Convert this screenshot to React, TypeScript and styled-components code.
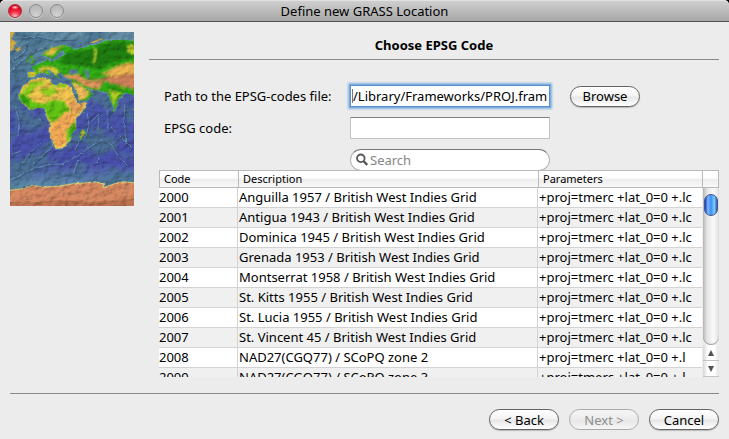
import React from "react";
import styled, { createGlobalStyle } from "styled-components";

const GlobalStyle = createGlobalStyle`
  * { box-sizing: border-box; }
  body { margin: 0; background: #000; }
  body, button, input { font-family: "Noto Sans", "Open Sans", sans-serif; font-size: 13px; color: #000; }
`;

const Window = styled.main`
  display: flex;
  flex-direction: column;
  min-height: 100vh;
  background: #ececec;
  border-radius: 5px 5px 0 0;
`;

const TitleBar = styled.header`
  display: grid;
  grid-template-columns: 1fr auto 1fr;
  align-items: center;
  height: 22px;
  padding: 0 8px;
  border-top: 1px solid #e2e2e2;
  border-bottom: 1px solid #515151;
  border-radius: 5px 5px 0 0;
  background: linear-gradient(#cfcfcf, #a7a7a7);
`;

const Lights = styled.div`
  display: flex;
  gap: 7px;
`;

const Light = styled.button<{ $active?: boolean }>`
  width: 14px;
  height: 14px;
  padding: 0;
  border: 1px solid ${(p) => (p.$active ? "#a8303c" : "#8b8b8b")};
  border-radius: 50%;
  background: ${(p) =>
    p.$active
      ? "radial-gradient(ellipse 4px 2px at 50% 20%, #ffdfe2, transparent), radial-gradient(circle at 50% 100%, #ffb4b4 8%, #f42f48 40%, #dc001c 75%)"
      : "radial-gradient(circle at 50% 90%, #d4d4d4, #bebebe 60%, #b2b2b2)"};
  box-shadow: 0 1px 0 #d0d0d0;
`;

const Title = styled.h1`
  margin: 0;
  font-size: 13px;
  font-weight: 400;
  line-height: 20px;
`;

const Body = styled.div`
  display: flex;
  gap: 15px;
  padding: 10px 10px 0;
`;

const Picture = styled.svg`
  flex: none;
  width: 124px;
  height: 174px;
`;

const Page = styled.section`
  flex: 1;
  min-width: 0;
`;

const Heading = styled.h2`
  margin: 0;
  height: 28px;
  border-bottom: 1px solid #8a8a8a;
  font-size: 13px;
  font-weight: 700;
  line-height: 26px;
  text-align: center;
`;

const Form = styled.form`
  display: grid;
  grid-template-columns: 186px 200px auto;
  justify-content: start;
  align-items: center;
  row-gap: 10px;
  padding: 25px 0 0 15px;
`;

const Label = styled.label`
  line-height: 22px;
  white-space: nowrap;
`;

const TextBox = styled.input`
  width: 200px;
  height: 22px;
  padding: 0 2px;
  border: 1px solid #c4c4c4;
  border-top-color: #7f7f7f;
  border-radius: 0;
  background: #fff;
  outline: none;
`;

const FocusedBox = styled(TextBox)`
  border-color: #5b8fcb;
  box-shadow: 0 0 0 1px #7eade0, 0 0 2px 2px #86b2e4;
  background: linear-gradient(#777, #777) 1px 3px / 1px 14px no-repeat #fff;
`;

const SearchBox = styled.div`
  grid-column: 2;
  display: flex;
  align-items: center;
  gap: 2px;
  height: 22px;
  padding: 0 5px;
  border: 1px solid #b5b5b5;
  border-top-color: #777;
  border-radius: 11px;
  background: #fff;
`;

const SearchInput = styled.input`
  flex: 1;
  min-width: 0;
  height: 18px;
  padding: 0;
  border: 0;
  background: none;
  outline: none;
  &::placeholder { color: #858585; opacity: 1; }
`;

const PushButton = styled.button`
  width: 70px;
  height: 21px;
  padding: 0;
  border: 1px solid #636363;
  border-radius: 11px;
  background: linear-gradient(#fff, #f3f3f3 48%, #e6e6e6 52%, #fff);
  box-shadow: 0 1px 1px #b9b9b9;
  line-height: 18px;
  &:disabled {
    border-color: #aaa;
    background: linear-gradient(#f5f5f5, #ededed 48%, #e6e6e6 52%, #f6f6f6);
    box-shadow: none;
    color: #8e8e8e;
  }
`;

const BrowseButton = styled(PushButton)`
  margin-left: 20px;
`;

const ListBox = styled.div`
  display: flex;
  position: relative;
  height: 207px;
  margin: -1px 0 0 10px;
  overflow: hidden;
`;

const TableArea = styled.div`
  flex: 1;
  min-width: 0;
  overflow: hidden;
`;

const Table = styled.table`
  width: 100%;
  table-layout: fixed;
  border-spacing: 0;
`;

const HeadCell = styled.th<{ $width?: number }>`
  width: ${(p) => (p.$width ? `${p.$width}px` : "auto")};
  height: 18px;
  padding: 0 4px;
  border: 1px solid #b9b9b9;
  border-right-width: 0;
  background: linear-gradient(#fff 40%, #ededed 55%, #f8f8f8);
  font-size: 11px;
  font-weight: 400;
  line-height: 14px;
  text-align: left;
`;

const Row = styled.tr`
  background: #fff;
  &:nth-child(even) { background: #f0f0f0; }
`;

const Cell = styled.td`
  height: 20px;
  padding: 0 0 0 1px;
  border-right: 1px solid #d3d3d3;
  border-bottom: 1px solid #d3d3d3;
  line-height: 19px;
  white-space: nowrap;
  overflow: hidden;
  &:first-child { padding-left: 0; }
  &:last-child { border-right: 0; }
`;

const ScrollBar = styled.div`
  display: flex;
  flex-direction: column;
  width: 17px;
`;

const Corner = styled.div`
  height: 18px;
  border: 1px solid #b9b9b9;
  background: linear-gradient(#fff 40%, #ededed 55%, #f8f8f8);
`;

const Track = styled.div`
  flex: 1;
  margin-left: 1px;
  padding: 6px 1px 0;
  border-radius: 0 0 8px 8px;
  background: linear-gradient(90deg, #b8b8b8, #e4e4e4 25%, #fafafa 65%, #e2e2e2);
  box-shadow: inset 0 -1px 1px #999;
`;

const Thumb = styled.div`
  height: 22px;
  border: 1px solid #42538c;
  border-radius: 7px;
  background: linear-gradient(90deg, #2038bd, #78baff 25%, #3f8df2 50%, #7bcbff 78%, #3558a5);
`;

const Arrow = styled.button`
  display: flex;
  align-items: center;
  justify-content: center;
  width: 16px;
  height: 16px;
  margin-left: 1px;
  padding: 0;
  border: 0;
  border-bottom: 1px solid #c3c3c3;
  background: linear-gradient(90deg, #d6d6d6, #fff 30%, #fff 70%, #e4e4e4);
`;

const Footer = styled.footer`
  display: flex;
  justify-content: flex-end;
  gap: 10px;
  margin: 16px 10px 0;
  padding-top: 15px;
  border-top: 1px solid #8a8a8a;
`;

const rows = [
  ["2000", "Anguilla 1957 / British West Indies Grid", "+proj=tmerc +lat_0=0 +.lc"],
  ["2001", "Antigua 1943 / British West Indies Grid", "+proj=tmerc +lat_0=0 +.lc"],
  ["2002", "Dominica 1945 / British West Indies Grid", "+proj=tmerc +lat_0=0 +.lc"],
  ["2003", "Grenada 1953 / British West Indies Grid", "+proj=tmerc +lat_0=0 +.lc"],
  ["2004", "Montserrat 1958 / British West Indies Grid", "+proj=tmerc +lat_0=0 +.lc"],
  ["2005", "St. Kitts 1955 / British West Indies Grid", "+proj=tmerc +lat_0=0 +.lc"],
  ["2006", "St. Lucia 1955 / British West Indies Grid", "+proj=tmerc +lat_0=0 +.lc"],
  ["2007", "St. Vincent 45 / British West Indies Grid", "+proj=tmerc +lat_0=0 +.lc"],
  ["2008", "NAD27(CGQ77) / SCoPQ zone 2", "+proj=tmerc +lat_0=0 +.l"],
  ["2009", "NAD27(CGQ77) / SCoPQ zone 3", "+proj=tmerc +lat_0=0 +.l"],
];

const AFRICA =
  "M21 48L27 46L38 46L41 48L40 51L47 54L50 51L58 53L61 56L65 65L69 71L77 70L76 75L71 81L66 86L66 95L62 102L60 109L53 116L46 117L43 111L39 99L40 91L36 83L35 77L29 75L20 78L13 71L9 66L10 60L13 54Z";
const EURASIA =
  "M18 40L25 40L22 35L28 32L34 30L38 26L39 30L45 29L50 25L55 23L53 18L47 22L44 27L38 25L32 23L37 18L48 14L54 13L61 15L64 18L72 16L80 14L90 12L93 9L103 8L112 8L128 9L128 66L120 61L114 61L108 68L105 78L101 69L98 62L92 59L82 58L75 54L80 59L83 62L79 67L70 71L66 64L61 54L62 48L57 46L53 45L51 40L47 42L49 46L45 43L40 38L37 38L42 44L36 41L31 40L27 42L24 45L18 45Z";
const ANTARCTICA =
  "M-4 159L10 157L23 154L38 155L50 154L62 152L76 151L85 150L94 152L93 156L104 152L113 150L128 151V180H-4Z";
const RIDGES =
  "M0 40L12 28L23 20L35 15M3 28L14 20L18 9M12 6L27 4L45 8L64 7M5 74L9 88L8 104M12 132L20 121L31 111M23 132L35 121L42 116M1 148L20 138L37 133L52 132L68 124L80 115L91 108L102 113L108 124L118 134M77 81L79 92L76 105M81 90L89 82L88 98M65 117L71 107M68 128L64 140M98 78L98 97M115 72L114 85L116 112M101 96L111 105L122 116M28 84L33 91M84 132L91 125M2 122L11 119";

function WorldMap() {
  return (
    <Picture viewBox="0 0 124 174" role="img" aria-label="Relief map of Africa, Europe and western Asia">
      <defs>
        <linearGradient id="sea" x1="0" y1="0" x2="0" y2="1">
          <stop offset="0" stopColor="#6690a8" />
          <stop offset=".22" stopColor="#527e9c" />
          <stop offset=".42" stopColor="#4a58ac" />
          <stop offset=".75" stopColor="#4a50b0" />
          <stop offset=".9" stopColor="#6499ae" />
        </linearGradient>
        <filter id="relief" x="0" y="0" width="1" height="1" colorInterpolationFilters="sRGB">
          <feTurbulence type="fractalNoise" baseFrequency=".14 .18" numOctaves="3" seed="8" result="n" />
          <feDiffuseLighting in="n" surfaceScale="1" diffuseConstant="1.1" lightingColor="#fff" result="l">
            <feDistantLight azimuth="225" elevation="60" />
          </feDiffuseLighting>
          <feBlend in="SourceGraphic" in2="l" mode="multiply" />
        </filter>
        <filter id="tint" x="0" y="0" width="1" height="1" colorInterpolationFilters="sRGB">
          <feTurbulence type="fractalNoise" baseFrequency=".04 .05" numOctaves="4" seed="15" />
          <feColorMatrix values="0 0 0 0 .3  0 0 0 0 .46  0 0 0 0 .58  4 0 0 0 -1.7" />
        </filter>
        <filter id="coast" x="-.1" y="-.1" width="1.2" height="1.2" colorInterpolationFilters="sRGB">
          <feTurbulence type="fractalNoise" baseFrequency=".25" numOctaves="2" seed="4" />
          <feDisplacementMap in="SourceGraphic" scale="3" xChannelSelector="R" yChannelSelector="G" />
        </filter>
        <filter id="soft" colorInterpolationFilters="sRGB"><feGaussianBlur stdDeviation=".8" /></filter>
        <clipPath id="land">
          <path d={AFRICA} />
          <path d={EURASIA} />
        </clipPath>
      </defs>
      <g filter="url(#relief)">
        <rect width="124" height="174" fill="url(#sea)" />
        <rect width="124" height="160" filter="url(#tint)" opacity=".85" />
        <g filter="url(#coast)" fill="none">
          <path d={RIDGES} stroke="#304a72" strokeWidth="2" opacity=".4" transform="translate(1 1)" />
          <path d={RIDGES} stroke="#7db2c8" opacity=".55" />
        </g>
        <g filter="url(#coast)">
          <g fill="none" stroke="#79b0c4" strokeWidth="2" opacity=".5">
            <path d={AFRICA} /><path d={EURASIA} /><path d={ANTARCTICA} />
          </g>
          <path d={AFRICA} fill="#f8c850" />
          <path d={EURASIA} fill="#32b016" />
          <g clipPath="url(#land)">
            <g filter="url(#soft)">
              <path d="M55 21L84 17L94 12L105 10L128 11V25L98 32L88 38L76 34L50 32Z" fill="#1f7f10" />
              <path d="M10 66L19 65L24 70L34 72L42 68L53 69L61 80L62 91L66 100L57 111L55 97L48 91L41 90L34 78L20 78Z" fill="#62c814" />
              <path d="M20 50L12 60L10 66L21 62L25 56L38 49ZM28 58L43 55L49 60L38 65ZM41 48L52 51L59 53L54 56L41 54Z" fill="#90cf20" />
              <path d="M9 61L18 66L20 76L10 69ZM65 88L66 99L61 107L60 99Z" fill="#2da80b" />
              <path d="M46 89L54 81L60 79L64 84L62 94L56 99L57 109L48 115L42 106L41 95Z" fill="#faae58" />
              <path d="M61 67L68 71L76 71L66 84L62 78L58 72Z" fill="#e8a55c" />
              <path d="M61 50L70 53L80 60L76 66L70 69Z" fill="#f8c05c" />
              <path d="M52 43L68 42L75 47L94 50L88 58L75 54L65 48L54 46Z" fill="#e4985c" />
              <path d="M84 48L103 44L128 40V58L111 54L97 50Z" fill="#d4845c" />
              <path d="M91 42L109 33L128 29V40L104 45Z" fill="#f0b750" />
              <path d="M18 39H26V46H18ZM29 35L43 34L50 39L46 44L38 39L28 41Z" fill="#d9c83a" />
              <path d="M33 22L43 15L56 14L48 17L42 24Z" fill="#e5bd45" />
              <path d="M84 15L87 17L86 29L82 34L84 25ZM117 13H128V24L117 20Z" fill="#bed02c" />
              <path d="M98 55H116L106 68L104 76Z" fill="#b4cf28" />
              <path d="M97 53L119 58L115 61L97 57Z" fill="#23910f" />
            </g>
            <g fill="none" stroke="#b57543" strokeWidth="1" opacity=".5">
              <path d="M44 56L50 64M60 68L62 82L57 94M47 103L53 111M93 47L106 43L118 45M99 51L124 50M79 45L93 50" />
            </g>
          </g>
          <path d="M58 38L66 37L69 41L61 42ZM75 36L79 40L79 48L76 45Z" fill="#5c86a2" />
          <path d="M59 50L61 50L66 60L70 69L78 68L70 72L67 70Z" fill="#557f9e" />
          <path d="M73 97L75 100L72 107L70 106L71 100Z" fill="#e0a848" stroke="#58b320" />
          <path d="M19 24L23 23L24 31L20 32L22 28ZM16 27L19 28L17 32Z" fill="#47a91e" />
          <path d="M5 17L11 15L12 18L7 20ZM79 11L92 6L94 7L83 11ZM-4 0H5L1 7L7 10L2 19L-4 18Z" fill="#cfae49" />
          <path d="M102 78L104 78L105 82ZM122 76H128V80Z" fill="#5bbb1a" />
          <path d={ANTARCTICA} fill="#d98a62" stroke="#e7d36f" strokeWidth="1" />
          <path d="M-4 170H25L50 168L80 170L128 166V180H-4Z" fill="#a95f40" opacity=".5" />
        </g>
      </g>
    </Picture>
  );
}

export default function App() {
  return (
    <>
      <GlobalStyle />
      <Window>
        <TitleBar>
          <Lights>
            <Light $active aria-label="Close" />
            <Light aria-label="Minimize" />
            <Light aria-label="Zoom" />
          </Lights>
          <Title>Define new GRASS Location</Title>
        </TitleBar>
        <Body>
          <WorldMap />
          <Page>
            <Heading>Choose EPSG Code</Heading>
            <Form>
              <Label htmlFor="path">Path to the EPSG-codes file:</Label>
              <FocusedBox id="path" defaultValue="/Library/Frameworks/PROJ.framework" />
              <BrowseButton type="button">Browse</BrowseButton>
              <Label htmlFor="code">EPSG code:</Label>
              <TextBox id="code" />
              <SearchBox>
                <svg width="12" height="14" viewBox="0 0 12 14" fill="none" stroke="#565656" aria-hidden="true">
                  <circle cx="4.8" cy="5.3" r="3.8" strokeWidth="1.8" />
                  <path d="M7.7 8.3L11.2 12" strokeWidth="2.4" />
                </svg>
                <SearchInput type="text" placeholder="Search" aria-label="Search" />
              </SearchBox>
            </Form>
            <ListBox>
              <TableArea>
                <Table>
                  <thead>
                    <tr>
                      <HeadCell $width={79}>Code</HeadCell>
                      <HeadCell $width={300}>Description</HeadCell>
                      <HeadCell>Parameters</HeadCell>
                    </tr>
                  </thead>
                  <tbody>
                    {rows.map(([code, description, parameters]) => (
                      <Row key={code}>
                        <Cell>{code}</Cell>
                        <Cell>{description}</Cell>
                        <Cell>{parameters}</Cell>
                      </Row>
                    ))}
                  </tbody>
                </Table>
              </TableArea>
              <ScrollBar>
                <Corner />
                <Track>
                  <Thumb />
                </Track>
                <Arrow aria-label="Scroll up">
                  <svg width="6" height="6" viewBox="0 0 6 6"><path d="M3 0L6 6H0Z" fill="#505050" /></svg>
                </Arrow>
                <Arrow aria-label="Scroll down">
                  <svg width="6" height="6" viewBox="0 0 6 6"><path d="M0 0H6L3 6Z" fill="#505050" /></svg>
                </Arrow>
              </ScrollBar>
            </ListBox>
          </Page>
        </Body>
        <Footer>
          <PushButton>&lt; Back</PushButton>
          <PushButton disabled>Next &gt;</PushButton>
          <PushButton>Cancel</PushButton>
        </Footer>
      </Window>
    </>
  );
}
